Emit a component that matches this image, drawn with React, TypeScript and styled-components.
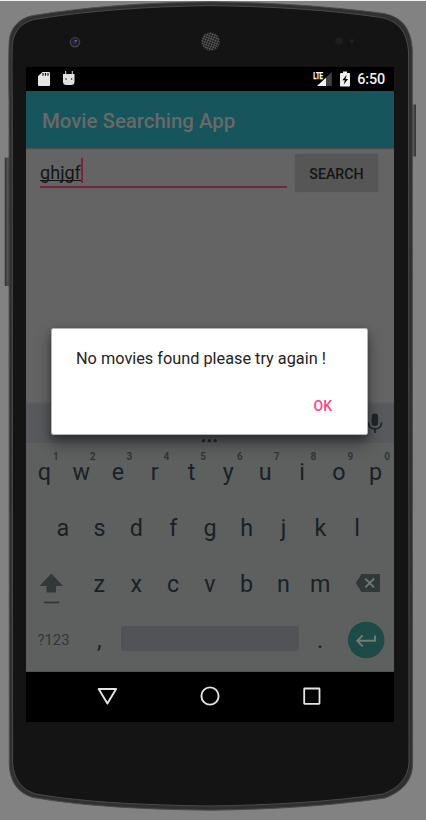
import React from "react";
import styled, { createGlobalStyle } from "styled-components";

const Global = createGlobalStyle`
  * { box-sizing: border-box; }
  html, body { margin: 0; padding: 0; background: #828282; }
  body { font-family: Roboto, sans-serif; overflow: hidden; }
`;

const Stage = styled.main`
  position: relative;
  width: 426px;
  height: 820px;
  padding: 66px 0 0 26px;
  background: #828282;
  border-top: 1px solid #f2f2f2;
  overflow: hidden;
`;

const DeviceArt = styled.svg`
  position: absolute;
  left: 0;
  top: -1px;
`;

const Screen = styled.section`
  position: relative;
  width: 368px;
  height: 655px;
  display: flex;
  flex-direction: column;
  background: #646464;
`;

const StatusBar = styled.header`
  height: 24px;
  flex: none;
  display: flex;
  align-items: center;
  justify-content: space-between;
  background: #000;
`;

const AppBar = styled.div`
  height: 57px;
  flex: none;
  display: flex;
  align-items: center;
  padding: 2px 0 0 16px;
  background: #15555b;
  box-shadow: 0 1px 1px rgba(0, 0, 0, 0.2);
  z-index: 1;
`;

const Title = styled.h1`
  margin: 0;
  color: #6b6869;
  font-size: 20.4px;
  line-height: 24px;
  font-weight: 500;
  white-space: nowrap;
`;

const Content = styled.div`
  height: 254px;
  flex: none;
  display: flex;
  align-items: flex-start;
  padding: 6px 16px 0 14px;
  gap: 8px;
`;

const Field = styled.div`
  display: flex;
  align-items: flex-start;
  width: 247px;
  height: 33.5px;
  padding-top: 4px;
  border-bottom: 2px solid #762443;
`;

const Typed = styled.span`
  height: 23px;
  color: #151515;
  font-size: 18.1px;
  line-height: 29px;
  border-bottom: 1px solid #151515;
`;

const Caret = styled.span`
  width: 2px;
  height: 25px;
  background: #7b2143;
`;

const SearchButton = styled.button`
  width: 83px;
  height: 38px;
  padding: 1px 0 0;
  border: 0;
  border-radius: 2px;
  background: #565656;
  box-shadow: 0 0 1px rgba(0, 0, 0, 0.25);
  color: #141414;
  font: 500 14.2px/20px Roboto, sans-serif;
`;

const Suggestions = styled.div`
  height: 41px;
  flex: none;
  display: flex;
  justify-content: flex-end;
  padding: 9px 7px 0 0;
  background: linear-gradient(#5f6061, #57595c 3px);
`;

const Keyboard = styled.div`
  height: 229px;
  flex: none;
  background: #5d605f;
  color: #192126;
  border-bottom: 1px solid #515453;
`;

const KeyRow = styled.div<{ $inset?: number }>`
  height: 56.2px;
  display: flex;
  padding: 0 ${(p) => p.$inset ?? 0}px;
`;

const Key = styled.div`
  position: relative;
  width: 36.8px;
  height: 56px;
  display: flex;
  justify-content: center;
  padding-top: 14.6px;
  font-size: 23.3px;
  line-height: 28px;
`;

const Hint = styled.sup`
  position: absolute;
  left: 27px;
  top: 7.6px;
  color: #30363a;
  font-size: 10px;
  line-height: 12px;
  font-weight: 700;
`;

const IconKey = styled.div`
  width: 55px;
  height: 56px;
  display: flex;
  align-items: flex-start;
  justify-content: center;
`;

const SymbolKey = styled.div`
  width: 55px;
  padding-top: 18px;
  text-align: center;
  color: #30373a;
  font-size: 14.8px;
  line-height: 20px;
`;

const SpaceBar = styled.div`
  width: 178px;
  height: 25px;
  margin: 14.5px 3px 0 3px;
  border-radius: 3px;
  background: #525356;
`;

const NavBar = styled.nav`
  height: 50px;
  flex: none;
  background: #000;
  display: flex;
  align-items: center;
  justify-content: space-between;
  padding: 0 72px 2px 71px;
`;

const Dialog = styled.div`
  position: absolute;
  left: 25px;
  top: 261px;
  width: 317px;
  height: 107px;
  display: flex;
  flex-direction: column;
  padding: 19px 35px 0 24px;
  border-radius: 2px;
  border: 1px solid #b5b5b5;
  background: #fff;
  background-clip: padding-box;
  box-shadow: 0 9px 15px rgba(0, 0, 0, 0.38), 0 2px 6px rgba(0, 0, 0, 0.25);
  z-index: 3;
`;

const Message = styled.p`
  margin: 0;
  color: #232323;
  font-size: 16.3px;
  line-height: 22px;
  white-space: nowrap;
`;

const OkButton = styled.button`
  align-self: flex-end;
  margin-top: 26px;
  padding: 0;
  border: 0;
  background: none;
  color: #ff4585;
  font: 500 14px/20px Roboto, sans-serif;
`;

const Ellipsis = styled.svg`
  position: absolute;
  left: 175px;
  top: 371px;
  z-index: 4;
`;

const outline =
  "M9 100C8.600 80 8.500 53 9.300 40C10.500 28 19 18.500 32 15.700C85 7 145 2.500 210 1.800C275 2.500 330 6.500 384 13.500C400 17 411 26 412.300 50L412.600 765C412 782 401 792 385 798C330 806 270 809.500 211 810.200C145 809.500 85 806.500 33 797.500C19 793 10.500 784 9.300 765Z";
const face =
  "M12.300 100C12 78 11.800 52 12.500 43C14 31 22 22.500 34 19.500C85 11 145 6.500 210 5.600C275 6.500 330 10 381 17.500C397 21 407 30 408.500 52L409 763C408 778 398 788.500 383 794C330 802 270 805 211 806C145 805 85 802.500 36 794C22 790 13.500 779 12.600 763Z";

const Device = () => (
  <DeviceArt width="426" height="820" viewBox="0 0 426 820">
    <defs>
      <linearGradient id="side">
        <stop offset="0" stopColor="#2c2c2c" />
        <stop offset=".5" stopColor="#555" />
        <stop offset="1" stopColor="#303030" />
      </linearGradient>
      <pattern id="mesh" width="2.400" height="2.400" patternUnits="userSpaceOnUse" patternTransform="rotate(20)">
        <path d="M0 0H2.400M0 0V2.400" stroke="#636363" strokeWidth="1" />
      </pattern>
    </defs>
    <rect x="4.800" y="157.500" width="5" height="128.500" fill="url(#side)" />
    <rect x="411" y="104.500" width="5" height="52" fill="url(#side)" />
    <path d={outline} fill="#303031" stroke="#4c4c4d" strokeWidth="1" />
    <path d={face} fill="#141414" stroke="#49494b" strokeWidth="1" />
    <circle cx="75" cy="42.300" r="5.300" fill="#424242" />
    <circle cx="75" cy="42" r="4" fill="#202024" />
    <circle cx="74.700" cy="42" r="2" fill="#272770" />
    <circle cx="76" cy="40.800" r=".8" fill="#93939d" />
    <circle cx="210.500" cy="41.500" r="9.500" fill="#1c1c1c" />
    <circle cx="210.500" cy="41.500" r="9.300" fill="url(#mesh)" />
    <circle cx="339" cy="41" r="3.800" fill="#1e1e1e" />
    <circle cx="352" cy="41.300" r="2.200" fill="#202020" />
  </DeviceArt>
);

const StatusGlyphs = () => (
  <svg width="368" height="24" viewBox="26 67 368 24">
    <path d="M42.500 72H49Q50 72 50 73V85Q50 86 49 86H39Q38 86 38 85V76.300Z" fill="#e4e4e4" />
    <path d="M43 73V75.800M45.500 73V75.800M48 73V75.800" stroke="#111" strokeWidth="1.200" />
    <path d="M65.700 71V75M72.300 71V75" stroke="#ddd" strokeWidth="1" />
    <path d="M63 74H74.500V81.500Q74.500 85 71 85H66.500Q63 85 63 81.500Z" fill="#e0e0e0" />
    <circle cx="66" cy="79" r=".8" fill="#222" />
    <circle cx="71.600" cy="79" r=".8" fill="#222" />
    <path d="M331.800 72V86H317Z" fill="#414141" />
    <path d="M326 77.800V86H317Z" fill="#f0f0f0" />
    <text x="313.300" y="78.500" fontSize="8.800" fontWeight="700" fill="#fff" stroke="#fff" strokeWidth=".25" textLength="9.700" lengthAdjust="spacingAndGlyphs">LTE</text>
    <path d="M343 71.500H347V73H349Q350 73 350 74V85.500Q350 86.500 349 86.500H341Q340 86.500 340 85.500V74Q340 73 341 73H343Z" fill="#eee" />
    <path d="M346.800 74.800L342.300 80.300H344.800L343.800 84.500L348 79H345.500Z" fill="#000" />
    <text x="357.300" y="84.400" fontSize="14.400" fontWeight="500" fill="#f2f2f2" textLength="27.800">6:50</text>
  </svg>
);

const numbers = "1234567890";

export default function App() {
  return (
    <>
      <Global />
      <Stage>
        <Device />
        <Screen>
          <StatusBar><StatusGlyphs /></StatusBar>
          <AppBar><Title>Movie Searching App</Title></AppBar>
          <Content>
            <Field><Typed>ghjgf</Typed><Caret /></Field>
            <SearchButton>SEARCH</SearchButton>
          </Content>
          <Suggestions>
            <svg width="24" height="24" viewBox="363 411 24 24">
              <rect x="371.700" y="413.500" width="6.400" height="12.500" rx="3.200" fill="#202629" />
              <path d="M368.300 422.500C368.300 431 381.500 431 381.500 422.500M375 429V433" fill="none" stroke="#202629" strokeWidth="1.700" />
            </svg>
          </Suggestions>
          <Keyboard>
            <KeyRow>
              {"qwertyuiop".split("").map((letter, i) => (
                <Key key={letter}>{letter}<Hint>{numbers[i]}</Hint></Key>
              ))}
            </KeyRow>
            <KeyRow $inset={18.4}>
              {"asdfghjkl".split("").map((letter) => <Key key={letter}>{letter}</Key>)}
            </KeyRow>
            <KeyRow>
              <IconKey>
                <svg width="55" height="56" viewBox="26 555 55 56">
                  <path d="M51.300 573.500L63 586H56V592.500H46.500V586H39.500Z" fill="#303838" />
                  <path d="M44 602.500H59.300" stroke="#303838" strokeWidth="1.700" />
                </svg>
              </IconKey>
              {"zxcvbnm".split("").map((letter) => <Key key={letter}>{letter}</Key>)}
              <IconKey>
                <svg width="55" height="56" viewBox="339 555 55 56">
                  <path d="M361.500 574H379Q380 574 380 575V591Q380 592 379 592H361.500L355.800 583Z" fill="#303838" />
                  <path d="M365.300 578.600L374 587.400M374 578.600L365.300 587.400" stroke="#737676" strokeWidth="1.900" />
                </svg>
              </IconKey>
            </KeyRow>
            <KeyRow>
              <SymbolKey>?123</SymbolKey>
              <Key>,</Key>
              <SpaceBar />
              <Key>.</Key>
              <IconKey>
                <svg width="55" height="56" viewBox="339 611.500 55 56">
                  <circle cx="366.200" cy="639.500" r="18.300" fill="#1d4b47" />
                  <path d="M375 635V640.300H357.500M362.700 634.800L357.200 640.300L362.700 645.800" fill="none" stroke="#747b7a" strokeWidth="1.900" />
                </svg>
              </IconKey>
            </KeyRow>
          </Keyboard>
          <NavBar>
            <svg width="20" height="20" viewBox="97 686 20 20"><path d="M98.700 689H116.100L107.400 703.500Z" fill="none" stroke="#e4e4e4" strokeWidth="1.900" strokeLinejoin="round" /></svg>
            <svg width="20" height="20" viewBox="200 686 20 20"><circle cx="210" cy="696" r="8.600" fill="none" stroke="#e4e4e4" strokeWidth="1.900" /></svg>
            <svg width="20" height="20" viewBox="302 686 20 20"><rect x="304.200" y="688.500" width="15.300" height="15.300" rx=".5" fill="none" stroke="#e4e4e4" strokeWidth="1.800" /></svg>
          </NavBar>
          <Dialog role="dialog">
            <Message>No movies found please try again !</Message>
            <OkButton>OK</OkButton>
          </Dialog>
          <Ellipsis width="18" height="6" viewBox="0 0 18 6">
            <circle cx="2.600" cy="2.700" r="1.600" fill="#171c20" />
            <circle cx="8.400" cy="2.700" r="1.600" fill="#171c20" />
            <circle cx="14.200" cy="2.700" r="1.600" fill="#171c20" />
          </Ellipsis>
        </Screen>
      </Stage>
    </>
  );
}
